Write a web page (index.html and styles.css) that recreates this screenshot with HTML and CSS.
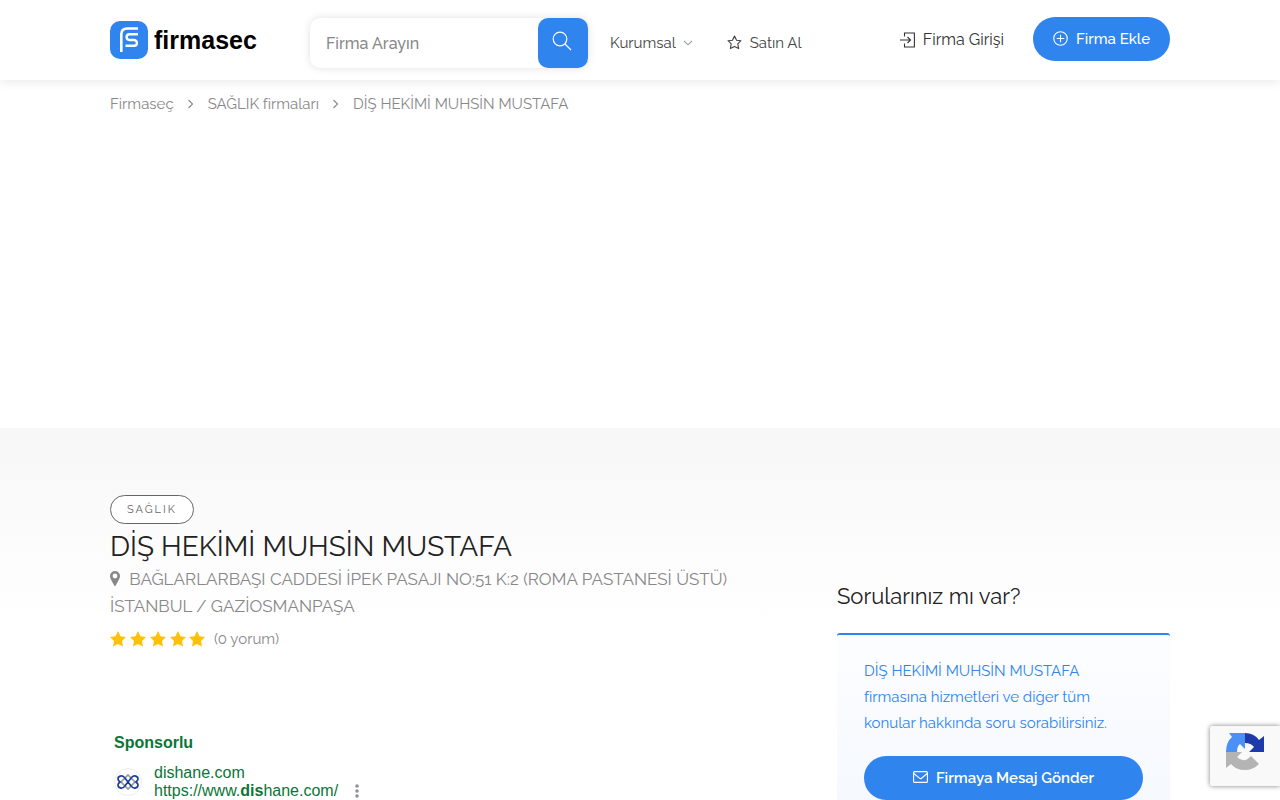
FILE: index.html
```html
<!DOCTYPE html>
<html lang="tr">
<head>
    <meta charset="UTF-8">
    <meta name="viewport" content="width=device-width, initial-scale=1.0">
    <title>DİŞ HEKİMİ MUHSİN MUSTAFA - Firmaseç</title>
    <link rel="stylesheet" href="styles.css">
</head>
<body>
    <header class="header">
        <div class="container header-inner">
            <a href="#" class="logo">
                <svg width="38" height="38" viewBox="0 0 38 38" fill="none" aria-hidden="true">
                    <rect width="38" height="38" rx="10" fill="#2f84ee"/>
                    <path d="M11.3 31V13.5Q11.3 7.5 17.3 7.5H28" stroke="#fff" stroke-width="2.6"/>
                    <path d="M28 13.200H19.500a2.900 2.900 0 0 0 0 5.800H24a2.900 2.900 0 0 1 0 5.800H15.500" stroke="#fff" stroke-width="2.4"/>
                </svg>
                <span>firmasec</span>
            </a>

            <form class="search">
                <input type="text" placeholder="Firma Arayın" aria-label="Firma Arayın">
                <button type="button" aria-label="Ara">
                    <svg width="20" height="20" viewBox="0 0 20 20" fill="none" stroke="#fff" stroke-width="1.2">
                        <circle cx="8" cy="8" r="6.8"/>
                        <path d="M13 13l6 6"/>
                    </svg>
                </button>
            </form>

            <nav class="nav">
                <a href="#">Kurumsal
                    <svg class="caret" width="10" height="6" viewBox="0 0 10 6" fill="none" stroke="#999" stroke-width="1.1"><path d="M1 .8l4 4 4-4"/></svg>
                </a>
                <a href="#">
                    <svg width="15" height="15" viewBox="0 0 16 16" fill="none" stroke="#444" stroke-width="1.2" stroke-linejoin="round"><path d="M8 1.2l2.200 4.400 4.700.5-3.400 3.300.9 5L8 12.200l-4.400 2.200.9-5L1.100 6.100l4.700-.5z"/></svg>
                    Satın Al
                </a>
            </nav>

            <div class="header-actions">
                <a href="#" class="sign-in">
                    <svg width="15" height="16" viewBox="0 0 15 16" fill="none" stroke="#333" stroke-width="1.1"><path d="M4.500 4.500V1h9.900v14H4.500v-3.500M0 8h10.500M7.500 5l3 3-3 3"/></svg>
                    Firma Girişi
                </a>
                <a href="#" class="button add">
                    <svg width="15" height="15" viewBox="0 0 16 16" fill="none" stroke="#fff" stroke-width="1.2"><circle cx="8" cy="8" r="7.2"/><path d="M8 4v8M4 8h8"/></svg>
                    Firma Ekle
                </a>
            </div>
        </div>
    </header>

    <div class="container">
        <nav class="breadcrumb" aria-label="breadcrumb">
            <a href="#">Firmaseç</a>
            <svg width="6" height="10" viewBox="0 0 6 10" fill="none" stroke="#888" stroke-width="1.1"><path d="M.500 1l4 4-4 4"/></svg>
            <a href="#">SAĞLIK firmaları</a>
            <svg width="6" height="10" viewBox="0 0 6 10" fill="none" stroke="#888" stroke-width="1.1"><path d="M.500 1l4 4-4 4"/></svg>
            <span>DİŞ HEKİMİ MUHSİN MUSTAFA</span>
        </nav>
    </div>
    <div class="ad-top"></div>

    <div class="titlebar">
        <div class="container columns">
            <main class="listing">
                <a href="#" class="tag">SAĞLIK</a>
                <h1>DİŞ HEKİMİ MUHSİN MUSTAFA</h1>
                <a href="#" class="address">
                    <svg width="10" height="15" viewBox="0 0 10 15" fill="#888"><path fill-rule="evenodd" d="M5 0a5 5 0 0 1 5 5c0 2-1.300 4-4.200 9.500a.9.900 0 0 1-1.600 0C1.300 9 0 7 0 5a5 5 0 0 1 5-5zm0 2.600a2.400 2.400 0 1 0 0 4.800 2.400 2.400 0 0 0 0-4.800z"/></svg>
                    BAĞLARLARBAŞI CADDESİ İPEK PASAJI NO:51 K:2 (ROMA PASTANESİ ÜSTÜ) İSTANBUL / GAZİOSMANPAŞA
                </a>
                <div class="rating">
                    <svg width="96" height="16" viewBox="0 0 96 16" fill="#ffc107" role="img" aria-label="5 yıldız">
                        <defs><path id="star" d="M8 0l2.500 5.200 5.500.8-4 4 1 5.600L8 13l-5 2.600L4 10 0 6l5.500-.8z"/></defs>
                        <use href="#star"/>
                        <use href="#star" x="20"/>
                        <use href="#star" x="40"/>
                        <use href="#star" x="60"/>
                        <use href="#star" x="79"/>
                    </svg>
                    <a href="#">(0 yorum)</a>
                </div>

                <section class="ad">
                    <strong>Sponsorlu</strong>
                    <div class="ad-row">
                        <span class="ad-icon">
                            <svg width="22" height="16" viewBox="0 0 22 16" fill="none" stroke-width="1.700">
                                <path d="M11 1l7 7-7 7-7-7z" stroke="#999"/>
                                <path d="M7.500 3.500C5 .8.800 2 1 5c0 1.300 1 2.200 2 3-1 .8-2 1.700-2 3 0 3 4 4.200 6.500 1.500l7-9C17 .8 21 2 21 5c0 1.300-1 2.200-2 3 1 .8 2 1.700 2 3 0 3-4 4.200-6.500 1.500z" stroke="#1a3e9c"/>
                            </svg>
                        </span>
                        <a href="#">dishane.com<br>https://www.<b>dis</b>hane.com/</a>
                        <button type="button" class="more" aria-label="Diğer">
                            <svg width="4" height="14" viewBox="0 0 4 14" fill="#8d9299"><circle cx="2" cy="2" r="1.800"/><circle cx="2" cy="7" r="1.800"/><circle cx="2" cy="12" r="1.800"/></svg>
                        </button>
                    </div>
                </section>
            </main>

            <aside class="sidebar">
                <h2>Sorularınız mı var?</h2>
                <div class="message-box">
                    <p>DİŞ HEKİMİ MUHSİN MUSTAFA firmasına hizmetleri ve diğer tüm konular hakkında soru sorabilirsiniz.</p>
                    <a href="#" class="button send">
                        <svg width="15" height="12" viewBox="0 0 15 12" fill="none" stroke="#fff" stroke-width="1.100"><rect x=".6" y=".6" width="13.800" height="10.800" rx="1"/><path d="M.8 2.500l5.700 4.700q1 .8 2 0l5.700-4.700"/></svg>
                        Firmaya Mesaj Gönder
                    </a>
                </div>
            </aside>
        </div>
    </div>

    <div class="recaptcha">
        <svg width="40" height="40" viewBox="0 0 40 40">
            <path d="M20 2v16l-5-5q-3 2-3 8H1Q1 11 7 6L4 2z" fill="#4a90f5"/>
            <path d="M20 2q9 0 14 7l5-4v16H24l5-5q-3-4-9-4z" fill="#1c3aa9"/>
            <path d="M1 21h16l-5 5q7 7 14-1l8 8q-6 6-14 6-9 0-14-6l-5 4z" fill="#b4b4b4"/>
        </svg>
    </div>
</body>
</html>
```

FILE: styles.css
```css
* {
    box-sizing: border-box;
}
body {
    margin: 0;
    font-family: Raleway, Lato, sans-serif;
    font-size: 15px;
    line-height: 26px;
    color: #808080;
    background: #fff;
    overflow-x: hidden;
}
a {
    color: inherit;
    text-decoration: none;
}
.container {
    max-width: 1100px;
    margin: 0 auto;
    padding: 0 20px;
}

/* header */
.header {
    position: relative;
    box-shadow: 0 0 12px rgba(0,0,0,0.12);
    background: #fff;
}
.header-inner {
    display: flex;
    align-items: center;
    height: 80px;
}
.logo {
    display: flex;
    align-items: center;
    gap: 6px;
    width: 200px;
    color: #000;
    font-family: "Liberation Sans", Arial, sans-serif;
    font-size: 25px;
    font-weight: bold;
}
.search {
    display: flex;
    width: 278px;
    height: 50px;
    margin-top: 6px;
    border-radius: 10px;
    background: #fff;
    box-shadow: 0 0 8px rgba(0,0,0,0.12);
}
.search input {
    flex: 1;
    min-width: 0;
    padding: 0 16px;
    border: none;
    background: none;
    font-family: Raleway, Lato, sans-serif;
    font-size: 16px;
    font-weight: 500;
}
.search input::placeholder {
    color: #888;
}
.search button {
    width: 50px;
    padding: 0 2px 4px 0;
    border: none;
    border-radius: 10px;
    background: #2f84ee;
}
.search svg {
    vertical-align: middle;
}
.nav {
    display: flex;
    gap: 34px;
    padding: 6px 0 0 22px;
    color: #444;
}
.nav a,
.sign-in,
.button {
    display: flex;
    align-items: center;
    gap: 8px;
    white-space: nowrap;
}
.nav a:first-child {
    gap: 7px;
}
.nav svg,
.button svg {
    margin-bottom: 2px;
}
.nav .caret {
    margin-bottom: 0;
}
.header-actions {
    display: flex;
    align-items: center;
    gap: 29px;
    margin-left: auto;
}
.sign-in {
    color: #333;
    font-size: 16px;
}
.button {
    height: 44px;
    padding: 0 20px;
    border-radius: 22px;
    background: #2f84ee;
    color: #fff;
    font-weight: 500;
}
.add {
    margin-bottom: 2px;
}

.breadcrumb {
    display: flex;
    align-items: center;
    gap: 14px;
    padding-top: 11px;
    color: #888;
}
.ad-top {
    height: 311px;
}

/* listing */
.titlebar {
    background: linear-gradient(#f7f7f7, #fff 200px);
}
.columns {
    display: flex;
    justify-content: space-between;
    gap: 60px;
}
.listing {
    flex: 1;
    max-width: 667px;
    padding-top: 67px;
}
.tag {
    display: inline-block;
    padding: 0 16px;
    border: 1px solid #666;
    border-radius: 15px;
    background: #fff;
    color: #666;
    font-size: 11px;
    line-height: 27px;
    letter-spacing: 2px;
    vertical-align: top;
}
h1 {
    margin: 3px 0 0;
    color: #222;
    font-size: 28px;
    font-weight: 400;
    line-height: 39px;
}
.address {
    display: block;
    color: #888;
    font-size: 17px;
    line-height: 27px;
}
.address svg {
    margin-right: 5px;
    vertical-align: -1px;
}
.rating {
    display: flex;
    align-items: center;
    gap: 8px;
    margin-top: 6px;
    color: #888;
}
.ad {
    padding: 82px 4px 20px;
    color: #0b7537;
    font-family: "Liberation Sans", Arial, sans-serif;
    font-size: 16px;
    line-height: 18px;
}
.ad-row {
    display: flex;
    align-items: flex-end;
    margin-top: 12px;
}
.ad-icon {
    display: flex;
    align-items: center;
    justify-content: center;
    width: 28px;
    height: 28px;
    margin-right: 12px;
    margin-bottom: 4px;
    border: 1px solid #eee;
    border-radius: 50%;
}
.more {
    display: flex;
    margin: 0 0 2px 17px;
    padding: 0;
    border: none;
    background: none;
}

/* sidebar */
.sidebar {
    width: 333px;
    padding-top: 153px;
}
h2 {
    margin: 0 0 21px;
    color: #222;
    font-size: 22px;
    font-weight: 400;
    line-height: 31px;
}
.message-box {
    padding: 23px 27px 30px;
    border-top: 2px solid #2f84ee;
    border-radius: 3px;
    background: linear-gradient(#fcfdff, #f4f8fe);
}
.message-box p {
    max-width: 250px;
    margin: 0 0 20px;
    color: #2f84ee;
}
.send {
    justify-content: center;
    font-weight: 600;
}

.recaptcha {
    position: fixed;
    right: 0;
    bottom: 14px;
    width: 70px;
    height: 60px;
    padding: 5px 15px;
    border-radius: 2px 0 0 2px;
    background: #f9f9f9;
    box-shadow: 0 0 5px #808080;
}
```
